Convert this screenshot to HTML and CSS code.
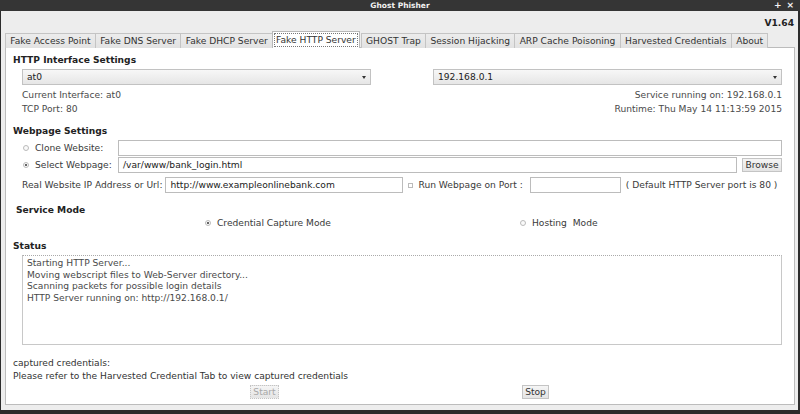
FILE: index.html
```html
<!DOCTYPE html>
<html>
<head>
<meta charset="utf-8">
<link rel="stylesheet" href="styles.css">
</head>
<body>
<div class="window">
  <div class="titlebar">
    <span class="title">Ghost Phisher</span>
    <span class="wm-btns"><span>+</span><span>×</span></span>
  </div>
  <div class="client">
    <div class="version">V1.64</div>
    <div class="tabs">
      <div class="tab">Fake Access Point</div>
      <div class="tab">Fake DNS Server</div>
      <div class="tab">Fake DHCP Server</div>
      <div class="tab active"><span class="focus">Fake HTTP Server</span></div>
      <div class="tab">GHOST Trap</div>
      <div class="tab">Session Hijacking</div>
      <div class="tab">ARP Cache Poisoning</div>
      <div class="tab">Harvested Credentials</div>
      <div class="tab">About</div>
    </div>
    <div class="panel">
      <div class="heading">HTTP Interface Settings</div>
      <div class="combos">
        <div class="combo"><span>at0</span><span class="arrow"></span></div>
        <div class="combo"><span>192.168.0.1</span><span class="arrow"></span></div>
      </div>
      <div class="info first"><span>Current Interface: at0</span><span>Service running on: 192.168.0.1</span></div>
      <div class="info second"><span>TCP Port: 80</span><span>Runtime: Thu May 14 11:13:59 2015</span></div>

      <div class="heading h-web">Webpage Settings</div>
      <div class="row row-clone">
        <span class="radio"></span><span class="lbl lbl-site">Clone Website:</span>
        <div class="input grow"></div>
      </div>
      <div class="row row-select">
        <span class="radio on"></span><span class="lbl lbl-site">Select Webpage:</span>
        <div class="input grow">/var/www/bank_login.html</div>
        <div class="button browse">Browse</div>
      </div>
      <div class="row row-real">
        <span class="lbl lbl-real">Real Website IP Address or Url:</span>
        <div class="input url">http://www.exampleonlinebank.com</div>
        <span class="check"></span><span class="lbl lbl-port">Run Webpage on Port :</span>
        <div class="input port"></div>
        <span class="lbl">( Default HTTP Server port is 80 )</span>
      </div>

      <div class="heading h-mode">Service Mode</div>
      <div class="row row-mode">
        <span class="radio on"></span><span class="lbl mode1">Credential Capture Mode</span>
        <span class="radio"></span><span class="lbl">Hosting &nbsp;Mode</span>
      </div>

      <div class="heading h-status">Status</div>
      <div class="status">Starting HTTP Server...<br>Moving webscript files to Web-Server directory...<br>Scanning packets for possible login details<br>HTTP Server running on: http://192.168.0.1/</div>

      <div class="plain cap">captured credentials:</div>
      <div class="plain refer">Please refer to the Harvested Credential Tab to view captured credentials</div>
      <div class="buttons">
        <div class="button disabled start">Start</div>
        <div class="button stop">Stop</div>
      </div>
    </div>
  </div>
</div>
</body>
</html>
```

FILE: styles.css
```css
* { box-sizing: border-box; }
html, body { margin: 0; padding: 0; }
body {
  width: 800px;
  height: 414px;
  overflow: hidden;
  font-family: "DejaVu Sans", sans-serif;
  font-size: 9.15px;
  color: #2e2e2e;
  background: #2a2a2a;
}
.window {
  width: 800px;
  height: 414px;
  background: #2c2c2c;
  display: flex;
  flex-direction: column;
}
.titlebar {
  height: 11px;
  position: relative;
  background: #353535;
  background-image: radial-gradient(#4a4a4a 0.6px, transparent 0.7px);
  background-size: 2px 2px;
  display: flex;
  justify-content: center;
  align-items: center;
  color: #f2f2f2;
  font-weight: bold;
  font-size: 7.5px;
}
.title { line-height: 11px; }
.wm-btns {
  position: absolute;
  right: 6px;
  top: 0;
  line-height: 11px;
  display: flex;
  gap: 5px;
  font-size: 9px;
}
.client {
  margin: 0 2px 4px 1px;
  flex: 1;
  background: #ededed;
  display: flex;
  flex-direction: column;
  padding: 0 0 0 4px;
}
.version {
  height: 20px;
  padding-top: 6px;
  text-align: right;
  padding-right: 4px;
  font-weight: bold;
  line-height: 12px;
  color: #222;
}
.tabs {
  display: flex;
  align-items: flex-end;
  height: 17px;
  margin-bottom: -1px;
  position: relative;
  z-index: 1;
}
.tab {
  height: 15px;
  line-height: 14px;
  padding: 0 4.3px;
  border: 1px solid #c4c4c4;
  border-bottom: none;
  margin-right: -1px;
  background: linear-gradient(#ececec, #e2e2e2);
  color: #333;
  white-space: nowrap;
}
.tab.active {
  height: 17px;
  background: #fff;
  line-height: 16px;
  padding: 0 1px;
  margin: 0 1px 0 0;
  border-color: #b8b8b8;
}
.focus {
  display: inline-block;
  line-height: 12px;
  padding: 0 1px;
  border: 1px dotted #777;
}
.panel {
  width: 790px;
  height: 358px;
  background: #fff;
  border: 1px solid #bcbcbc;
  padding: 6px 12px 0 7px;
}
.heading {
  height: 12px;
  line-height: 12px;
  font-weight: bold;
  color: #222;
}
.combos {
  margin-top: 3px;
  height: 16px;
  display: flex;
  gap: 62px;
  padding-left: 9px;
}
.combo {
  width: 349px;
  height: 16px;
  border: 1px solid #c2c2c2;
  background: linear-gradient(#f7f7f7, #e6e6e6);
  display: flex;
  justify-content: space-between;
  align-items: center;
  padding: 0 4px;
  color: #222;
}
.arrow {
  width: 0;
  height: 0;
  border-left: 2.5px solid transparent;
  border-right: 2.5px solid transparent;
  border-top: 3px solid #333;
}
.info {
  height: 12px;
  line-height: 12px;
  display: flex;
  justify-content: space-between;
  padding-left: 9px;
  padding-right: 0;
  color: #4a4a4a;
}
.info.first { margin-top: 4px; }
.info.second { margin-top: 2px; }
.h-web { margin-top: 10px; }
.row {
  height: 16px;
  display: flex;
  align-items: center;
  color: #3a3a3a;
  white-space: nowrap;
}
.row-clone { margin-top: 3px; padding-left: 10px; }
.row-select { margin-top: 1px; padding-left: 10px; }
.row-real { margin-top: 4px; padding-left: 9px; }
.radio {
  width: 6px;
  height: 6px;
  border-radius: 50%;
  border: 1px solid #bbb;
  background: #fafafa;
  margin-right: 6px;
  flex: none;
  position: relative;
}
.radio.on::after {
  content: "";
  position: absolute;
  left: 1px;
  top: 1px;
  width: 2px;
  height: 2px;
  border-radius: 50%;
  background: #333;
}
.lbl-site { width: 83px; }
.input {
  height: 16px;
  line-height: 14px;
  border: 1px solid #bcbcbc;
  background: #fff;
  padding: 0 4px;
  color: #222;
}
.grow { flex: 1; }
.browse { margin-left: 5px; width: 40px; height: 16px; line-height: 14px; }
.lbl-real { margin-right: 3px; }
.url { width: 238px; margin-right: 5px; }
.check {
  width: 5px;
  height: 5px;
  border: 1px solid #bbb;
  margin-right: 5px;
  flex: none;
}
.lbl-port { margin-right: 7px; }
.port { width: 91px; margin-right: 5px; }
.h-mode { margin-top: 11px; padding-left: 3px; }
.row-mode { margin-top: 1px; height: 12px; padding-left: 192px; }
.mode1 { width: 303px; }
.h-status { margin-top: 11px; }
.status {
  margin-top: 3px;
  margin-left: 9px;
  width: 760px;
  height: 90px;
  border: 1px solid #c8c8c8;
  border-top: 1px dotted #aaa;
  padding: 2px 4px;
  line-height: 11.6px;
  color: #4a4a4a;
}
.plain { height: 12px; line-height: 12px; color: #333; }
.cap { margin-top: 12px; }
.refer { margin-top: 1px; }
.buttons {
  margin-top: 3px;
  height: 14px;
  display: flex;
  padding-left: 237px;
}
.button {
  height: 14px;
  line-height: 12px;
  border: 1px solid #c4c4c4;
  background: linear-gradient(#f5f5f5, #e4e4e4);
  text-align: center;
  color: #333;
}
.start { width: 29px; margin-right: 243px; }
.stop { width: 27px; }
.disabled { color: #a8a8a8; border-style: dotted; }
```
